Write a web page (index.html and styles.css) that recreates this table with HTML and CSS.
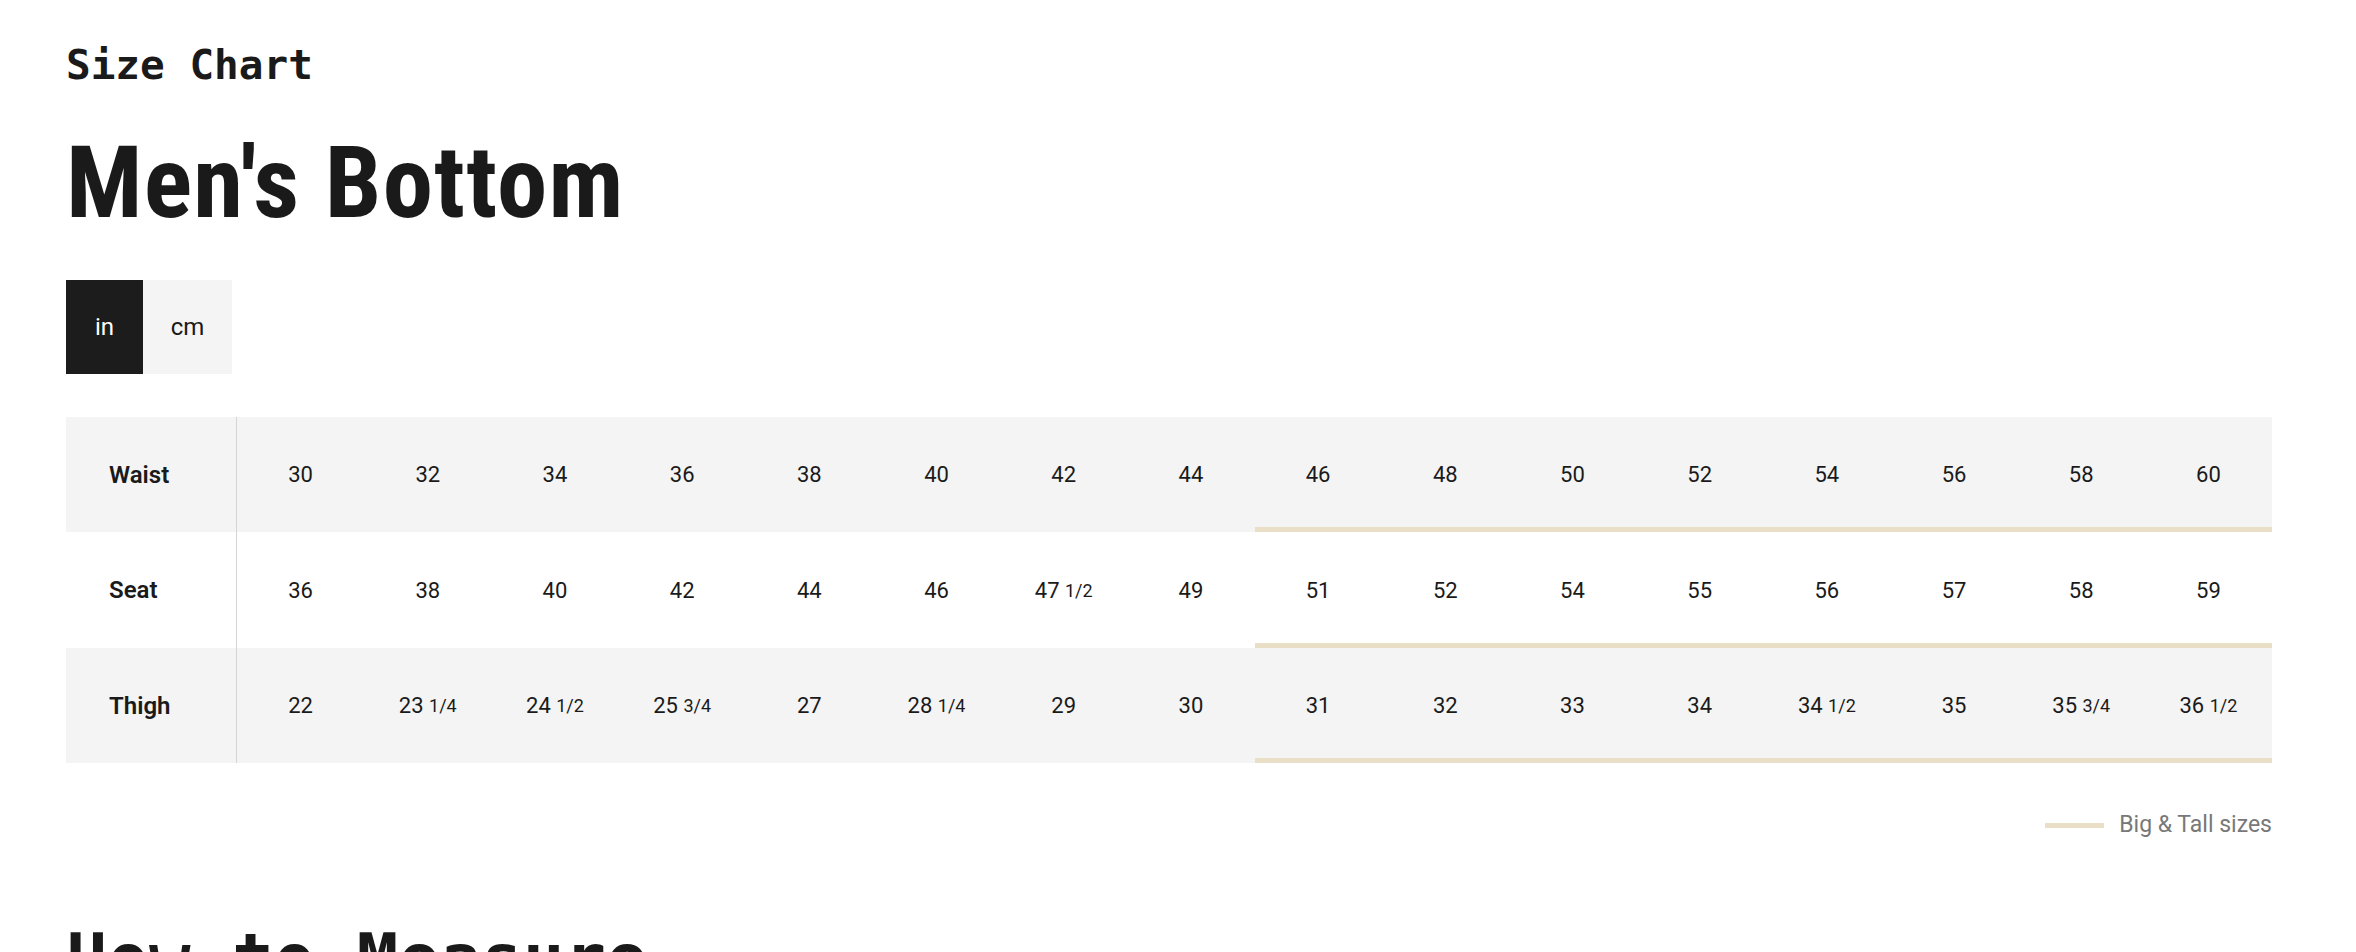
FILE: index.html
```html
<!DOCTYPE html>
<html lang="en">
<head>
<meta charset="utf-8">
<title>Size Chart - Men's Bottom</title>
<link rel="stylesheet" href="styles.css">
</head>
<body>
<div class="page">
  <p class="eyebrow">Size Chart</p>
  <h1 class="title">Men's Bottom</h1>
  <div class="units">
    <button class="unit unit--active">in</button>
    <button class="unit">cm</button>
  </div>

  <div class="chart">
    <div class="row row--shaded">
      <div class="label">Waist</div>
      <div class="cell">30</div>
      <div class="cell">32</div>
      <div class="cell">34</div>
      <div class="cell">36</div>
      <div class="cell">38</div>
      <div class="cell">40</div>
      <div class="cell">42</div>
      <div class="cell">44</div>
      <div class="cell cell--bt">46</div>
      <div class="cell cell--bt">48</div>
      <div class="cell cell--bt">50</div>
      <div class="cell cell--bt">52</div>
      <div class="cell cell--bt">54</div>
      <div class="cell cell--bt">56</div>
      <div class="cell cell--bt">58</div>
      <div class="cell cell--bt">60</div>
    </div>
    <div class="row">
      <div class="label">Seat</div>
      <div class="cell">36</div>
      <div class="cell">38</div>
      <div class="cell">40</div>
      <div class="cell">42</div>
      <div class="cell">44</div>
      <div class="cell">46</div>
      <div class="cell">47 <span class="frac">1/2</span></div>
      <div class="cell">49</div>
      <div class="cell cell--bt">51</div>
      <div class="cell cell--bt">52</div>
      <div class="cell cell--bt">54</div>
      <div class="cell cell--bt">55</div>
      <div class="cell cell--bt">56</div>
      <div class="cell cell--bt">57</div>
      <div class="cell cell--bt">58</div>
      <div class="cell cell--bt">59</div>
    </div>
    <div class="row row--shaded">
      <div class="label">Thigh</div>
      <div class="cell">22</div>
      <div class="cell">23 <span class="frac">1/4</span></div>
      <div class="cell">24 <span class="frac">1/2</span></div>
      <div class="cell">25 <span class="frac">3/4</span></div>
      <div class="cell">27</div>
      <div class="cell">28 <span class="frac">1/4</span></div>
      <div class="cell">29</div>
      <div class="cell">30</div>
      <div class="cell cell--bt">31</div>
      <div class="cell cell--bt">32</div>
      <div class="cell cell--bt">33</div>
      <div class="cell cell--bt">34</div>
      <div class="cell cell--bt">34 <span class="frac">1/2</span></div>
      <div class="cell cell--bt">35</div>
      <div class="cell cell--bt">35 <span class="frac">3/4</span></div>
      <div class="cell cell--bt">36 <span class="frac">1/2</span></div>
    </div>
  </div>

  <div class="legend">
    <span class="legend-swatch"></span>
    <span class="legend-text">Big &amp; Tall sizes</span>
  </div>

  <h2 class="section-title">How to Measure</h2>
</div>
</body>
</html>
```

FILE: styles.css
```css
* {
  box-sizing: border-box;
}

html, body {
  margin: 0;
  padding: 0;
  background: #ffffff;
}

body {
  font-family: Roboto, "Liberation Sans", sans-serif;
  color: #1a1a1a;
  overflow: hidden;
}

.page {
  padding: 41px 84px 0 66px;
}

.eyebrow {
  margin: 0;
  font-family: "DejaVu Sans Mono", "Liberation Mono", monospace;
  font-weight: 700;
  font-size: 41px;
  line-height: 49px;
  color: #1a1a1a;
}

.title {
  margin: 42px 0 0 0;
  font-family: Roboto, "Liberation Sans", sans-serif;
  font-stretch: 75%;
  font-weight: 700;
  font-size: 101px;
  line-height: 101px;
  color: #1a1a1a;
  letter-spacing: 1.2px;
}

.units {
  display: flex;
  margin-top: 47px;
}

.unit {
  height: 94px;
  border: 0;
  margin: 0;
  padding: 0;
  font-family: Roboto, "Liberation Sans", sans-serif;
  font-size: 24px;
  font-weight: 400;
  background: #f4f4f4;
  color: #1a1a1a;
  cursor: pointer;
  width: 89px;
}

.unit--active {
  background: #1c1c1c;
  color: #ffffff;
  width: 77px;
}

.chart {
  margin-top: 43px;
}

.row {
  display: grid;
  grid-template-columns: 171px repeat(16, 1fr);
  height: 115px;
  background: #ffffff;
}

.row + .row {
  height: 116px;
}

.row:last-child {
  height: 115px;
}

.row--shaded {
  background: #f4f4f4;
}

.label {
  display: flex;
  align-items: center;
  padding-left: 43px;
  border-right: 1px solid #d4d4d4;
  font-size: 24px;
  font-weight: 600;
  color: #1a1a1a;
}

.cell {
  display: flex;
  align-items: center;
  justify-content: center;
  font-size: 22px;
  font-weight: 400;
  color: #1a1a1a;
  white-space: pre;
}

.cell--bt {
  box-shadow: inset 0 -5px 0 #e9dfc6;
}

.frac {
  font-size: 18px;
}

.legend {
  display: flex;
  justify-content: flex-end;
  align-items: center;
  gap: 15px;
  margin-top: 49px;
}

.legend-swatch {
  width: 59px;
  height: 5px;
  background: #e9dfc6;
}

.legend-text {
  font-size: 23px;
  line-height: 26px;
  color: #787878;
}

.section-title {
  margin: 80px 0 0 0;
  font-family: "DejaVu Sans Mono", "Liberation Mono", monospace;
  font-weight: 700;
  font-size: 69px;
  line-height: 83px;
  color: #1a1a1a;
}
```
